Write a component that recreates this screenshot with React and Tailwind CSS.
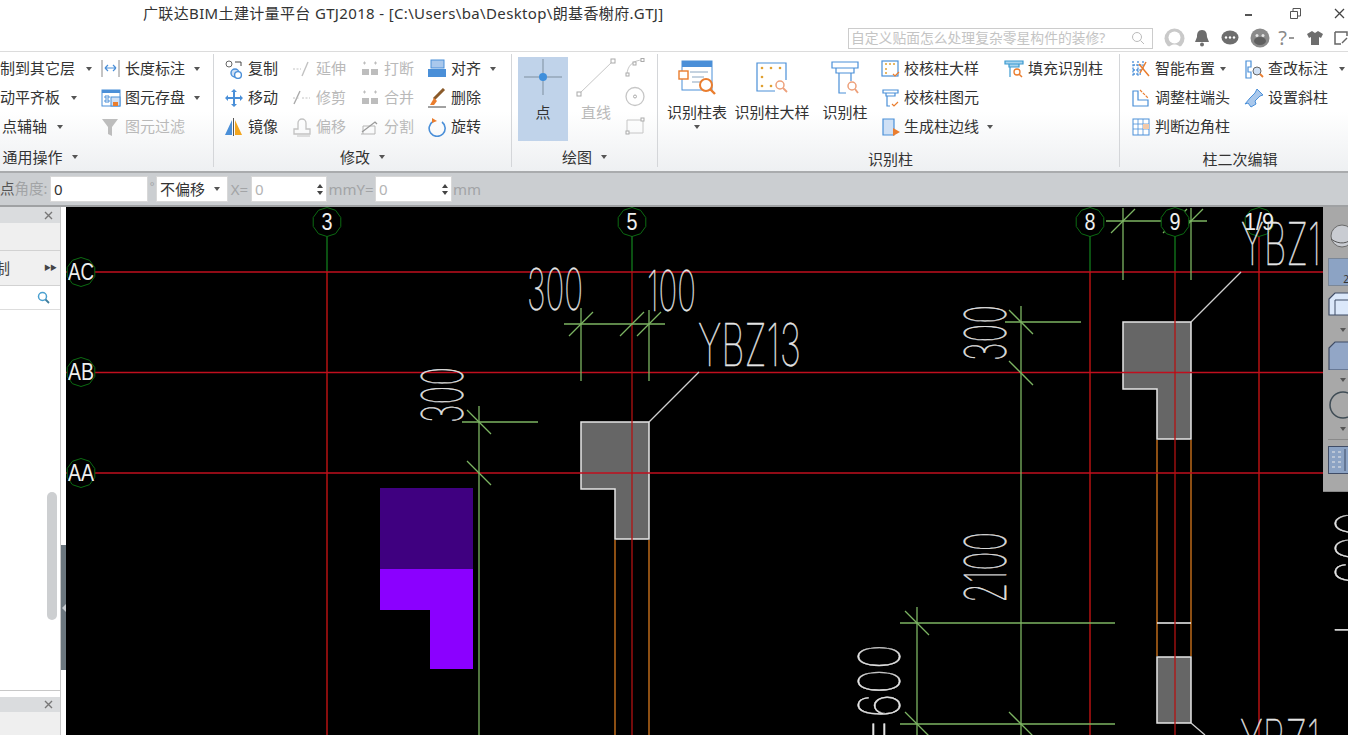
import React from 'react';

const Svg = ({ w = 20, h = 20, vb, className = '', children }) => (
    <svg width={w} height={h} viewBox={vb || `0 0 ${w} ${h}`} fill="none" className={`shrink-0 ${className}`}>
        {children}
    </svg>
);

const BLUE = '#4a8fd8';
const ORANGE = '#ea7d2e';
const GRAY = '#c2c2c2';

const icons = {
    dim: <><path d="M1 1v17M18 1v17" stroke="#8a8a8a" /><path d="M4 9h11M4 9l3-3M4 9l3 3M15 9l-3-3M15 9l-3 3" stroke={BLUE} strokeWidth="1.2" /></>,
    save: <><rect x="1" y="2" width="18" height="16" fill="#fff" stroke={BLUE} /><rect x="1" y="2" width="18" height="3" fill={BLUE} /><path d="M4 8h4v2H4zM4 12h4v2H4z" stroke={BLUE} /><rect x="10" y="9" width="9" height="9" fill="#cfe0f5" stroke={BLUE} /><rect x="12" y="14" width="5" height="4" fill={ORANGE} /></>,
    filter: <path d="M1 2h16l-6 8v9l-4-2v-7z" fill="#bdbdbd" />,
    copy: <><circle cx="5" cy="5" r="3" fill="#fff" stroke="#666" /><circle cx="11" cy="14" r="4" fill="#cfe0f5" stroke={BLUE} strokeWidth="1.4" /><circle cx="14" cy="16" r="3.4" fill="#fff" stroke={BLUE} strokeWidth="1.4" /><path d="M11 3h6v4" stroke="#444" /></>,
    move: <path d="M10 1l3 3h-2v5h5V7l3 3-3 3v-2h-5v5h2l-3 3-3-3h2v-5H4v2l-3-3 3-3v2h5V4H7z" fill={BLUE} />,
    mirror: <><path d="M8 3v15H1z" fill={BLUE} /><path d="M11 3v15h7z" fill="#f2a51f" /><path d="M9.5 1v18" stroke="#555" /></>,
    extend: <><path d="M1 10h8" stroke={GRAY} strokeDasharray="2 1.5" /><path d="M10 17l6-14" stroke={GRAY} strokeWidth="1.4" /></>,
    trim: <><path d="M2 16l6-13" stroke="#aaa" strokeWidth="1.4" /><path d="M1 10h6M10 10h8" stroke={GRAY} strokeDasharray="2 1.5" /></>,
    offset: <><path d="M2 17v-5h4V6a4 4 0 0 1 8 0v6h4v5z" stroke={GRAY} strokeWidth="1.3" /><path d="M5 19h13" stroke={GRAY} /></>,
    brk: <><rect x="2" y="10" width="7" height="6" fill="#bdbdbd" /><rect x="11" y="10" width="7" height="6" fill="#bdbdbd" /><path d="M3 4h3M4.500 2.500v3M14 4h3M15.500 2.500v3" stroke="#bdbdbd" /></>,
    split: <><path d="M1 17h14M3 17V9h12v8" stroke="#b5b5b5" /><path d="M2 15L15 5l2 2" stroke="#999" strokeWidth="1.3" /></>,
    align: <><rect x="4" y="1" width="13" height="8" fill="#a9c8ec" stroke={BLUE} /><rect x="1" y="10" width="18" height="8" fill={BLUE} /></>,
    erase: <><path d="M17 1L7 11" stroke="#8a5a2a" strokeWidth="3" /><path d="M7 10l3 3-3 4H3z" fill={ORANGE} /><path d="M1 19h18" stroke="#444" /></>,
    rotate: <><path d="M15 5a8 8 0 1 1-9-.5" stroke={BLUE} strokeWidth="1.6" /><path d="M5 1l5 3-5 2z" fill={ORANGE} /></>,
    check1: <><rect x="1" y="2" width="16" height="15" stroke={BLUE} strokeWidth="1.2" fill="#fff" /><circle cx="5" cy="5" r="1" fill="#e0a030" /><circle cx="9" cy="5" r="1" fill="#e0a030" /><circle cx="13" cy="5" r="1" fill="#e0a030" /><circle cx="5" cy="10" r="1" fill="#e0a030" /><circle cx="5" cy="14" r="1" fill="#e0a030" /><path d="M12 15l2 2 4-4" stroke={ORANGE} strokeWidth="1.2" /></>,
    check2: <><path d="M2 2h15v3H2zM5 5h9v3H5zM6 8v10h3" stroke={BLUE} strokeWidth="1.2" /><path d="M11 16l2 2 4-4" stroke={ORANGE} strokeWidth="1.2" /></>,
    edge: <><path d="M2 2h11v16H2z" fill="#cfe0f5" stroke={BLUE} strokeWidth="1.2" /><path d="M12 11l7 4-7 4z" fill={ORANGE} /></>,
    fill: <><path d="M1 2h18v3H1zM5 5h10v3H5z" stroke="#3b9ad0" strokeWidth="1.2" fill="#a8d4ee" /><path d="M6 8v10" stroke="#3b9ad0" strokeWidth="1.2" /><circle cx="13" cy="13" r="3" stroke={ORANGE} strokeWidth="1.3" /><path d="M15 15l3 3" stroke={ORANGE} strokeWidth="1.5" /></>,
    smart: <><path d="M2 2v16M7 2v16M12 2v8M2 6h10M2 11h8M2 15h8" stroke={BLUE} strokeDasharray="2 1.200" strokeWidth="1.3" /><path d="M8 5l10 12M15 3L9 14" stroke={ORANGE} strokeWidth="1.500" /></>,
    lookup: <><path d="M2 2h5v6H4v5h3v6H2z" stroke={BLUE} strokeWidth="1.2" /><circle cx="13" cy="12" r="4" fill="#cfe0f5" stroke="#666" /><path d="M16 15l3 3" stroke={ORANGE} strokeWidth="1.8" /></>,
    end: <><path d="M2 3h5v9h10v6H2z" stroke={BLUE} strokeWidth="1.200" fill="#fff" /><path d="M9 2l8 8" stroke={ORANGE} strokeWidth="1.200" strokeDasharray="3 1" /></>,
    tilt: <path d="M13 1l6 6-3 1-5 5 1 3-5 3-3-4-3 1 5-6 5-5z" fill="#a9c8ec" stroke={BLUE} />,
    corner: <><rect x="2" y="2" width="16" height="16" fill="#fff" stroke={BLUE} /><path d="M7 2v16M12 2v16M2 7h16M2 12h16" stroke={BLUE} strokeWidth=".8" /><rect x="12" y="7" width="6" height="5" fill="#f3c9a8" /></>,
};

const Icon = ({ name }) => <Svg>{icons[name]}</Svg>;

const Caret = ({ className = '' }) => (
    <span className={`block shrink-0 w-0 h-0 border-l-[3.5px] border-r-[3.5px] border-t-[4px] border-l-transparent border-r-transparent border-t-[#555] ${className}`} />
);

const Item = ({ icon, text, caret, off, gap = 'gap-[4px]', caretClass = 'ml-[5px]', className = '' }) => (
    <div className={`flex items-center h-[29px] whitespace-nowrap ${gap} ${off ? 'text-[#b9b9b9]' : 'text-[#333]'} ${className}`}>
        {icon && <Icon name={icon} />}
        <span>{text}</span>
        {caret && <Caret className={caretClass} />}
    </div>
);

const Group = ({ width, label, caret, children, last, pad = '', labelClass = 'pt-[5px]' }) => (
    <div className={`shrink-0 flex flex-col ${width} ${last ? '' : 'border-r border-[#d4d6d9]'} mb-[4px]`}>
        <div className={`flex h-[88px] ${pad}`}>{children}</div>
        <div className={`flex-1 flex items-center justify-center gap-[9px] whitespace-nowrap text-[#333] ${labelClass}`}>
            <span>{label}</span>
            {caret && <Caret />}
        </div>
    </div>
);

const BigButton = ({ width, label, caret, children }) => (
    <div className={`flex flex-col items-center whitespace-nowrap text-[#333] ${width}`}>
        <div className="h-[47px] flex items-center justify-center">{children}</div>
        <span>{label}</span>
        {caret && <Caret className="mt-[1px]" />}
    </div>
);

const TopBar = () => (
    <div className="h-[51px] relative flex flex-col bg-white">
        <div className="pl-[143px] h-[27px] flex items-center text-[#333] whitespace-nowrap justify-between">
            <span className="tracking-[0.35px]">广联达BIM土建计量平台 GTJ2018 - [C:\Users\ba\Desktop\朗基香榭府.GTJ]</span>
            <div className="flex items-center">
                <span className="w-[7px] h-[2px] bg-[#555] mr-[38px] mt-[3px]" />
                <Svg w={11} h={11} className="mr-[33px]"><path d="M.5 3.500h7v7h-7zM3 3V.5h7.500V8H8" stroke="#555" /></Svg>
                <Svg w={11} h={11} className="mr-[3px]"><path d="M1 1l9 9M10 1l-9 9" stroke="#444" strokeWidth="1.300" /></Svg>
            </div>
        </div>
        <div className="flex items-center pl-[848px] h-[22px]">
            <div className="w-[306px] h-[21px] border border-[#ccc] flex items-center justify-between pl-[2px] pr-[3px] text-[13.800px] text-[#c4c4c4] whitespace-nowrap">
                <span>自定义贴面怎么处理复杂零星构件的装修?</span>
                <Svg w={14} h={14} className="mr-[4px]"><circle cx="6" cy="6" r="4.500" stroke="#bbb" /><path d="M9.500 9.500l3.500 3.500" stroke="#bbb" /></Svg>
            </div>
            <div className="flex items-center ml-[11px] gap-[8px]">
                <Svg w={21} h={21}><circle cx="10.500" cy="10.500" r="10" fill="#c9c9c9" /><circle cx="10.500" cy="9.500" r="6" fill="#fff" /><path d="M4 21c1-6 12-6 13 0z" fill="#fff" /></Svg>
                <Svg w={16} h={18} className="ml-[1px]"><path d="M8 1c4 0 5 3 5 7l2 5H1l2-5c0-4 1-7 5-7z" fill="#6d6d6d" /><circle cx="8" cy="15.500" r="2" fill="#6d6d6d" /></Svg>
                <Svg w={18} h={16} className="ml-[3px]"><ellipse cx="9" cy="7.500" rx="8.500" ry="7" fill="#6d6d6d" /><circle cx="5" cy="7.500" r="1.200" fill="#fff" /><circle cx="9" cy="7.500" r="1.200" fill="#fff" /><circle cx="13" cy="7.500" r="1.200" fill="#fff" /></Svg>
                <Svg w={20} h={20} className="ml-[3px]"><circle cx="10" cy="10" r="9.500" fill="#8a8a8a" /><ellipse cx="10" cy="13" rx="6" ry="4" fill="#5f5f5f" /><circle cx="7" cy="7.500" r="1.500" fill="#e5e5e5" /><circle cx="13" cy="7.500" r="1.500" fill="#e5e5e5" /></Svg>
                <span className="text-[#8a8a8a] text-[20px] leading-none">?</span>
                <span className="w-[5px] h-[1.500px] bg-[#999] -ml-[6px]" />
                <Svg w={16} h={16} className="ml-[5px]"><path d="M5 1L0 4l2 4 2-1v8h8V7l2 1 2-4-5-3-3 2z" fill="#6d6d6d" /></Svg>
                <Svg w={14} h={14} className="ml-[3px]"><path d="M1 1h12v4M1 1v12h6" stroke="#666" strokeWidth="1.500" /><path d="M8 12l5-5" stroke="#666" strokeWidth="1.500" /></Svg>
            </div>
        </div>
    </div>
);

const Ribbon = () => (
    <div className="h-[122px] flex border-t border-b-2 border-t-[#dcdcdc] border-b-[#a9abad] pt-[2px] bg-gradient-to-b from-white via-white to-[#eef0f2]">
        <Group width="w-[214px]" label="通用操作" caret labelClass="pt-[5px] pl-[2px] pr-[135px]">
            <div className="w-[101px] shrink-0 overflow-hidden">
                <Item text="制到其它层" caret caretClass="ml-[7px]" />
                <Item text="动平齐板" caret caretClass="ml-[7px]" />
                <Item text="点辅轴" caret caretClass="ml-[6px]" className="pl-[2px]" />
            </div>
            <div>
                <Item icon="dim" text="长度标注" caret />
                <Item icon="save" text="图元存盘" caret />
                <Item icon="filter" text="图元过滤" off />
            </div>
        </Group>
        <Group width="w-[298px]" label="修改" caret pad="pl-[10px]">
            <div className="w-[68px]">
                <Item icon="copy" text="复制" />
                <Item icon="move" text="移动" />
                <Item icon="mirror" text="镜像" />
            </div>
            <div className="w-[68px]">
                <Item icon="extend" text="延伸" off />
                <Item icon="trim" text="修剪" off />
                <Item icon="offset" text="偏移" off />
            </div>
            <div className="w-[67px]">
                <Item icon="brk" text="打断" off />
                <Item icon="brk" text="合并" off />
                <Item icon="split" text="分割" off />
            </div>
            <div>
                <Item icon="align" text="对齐" caret />
                <Item icon="erase" text="删除" />
                <Item icon="rotate" text="旋转" />
            </div>
        </Group>
        <Group width="w-[146px]" label="绘图" caret pad="pl-[6px]">
            <div className="w-[50px] h-[84px] mt-[3px] bg-[#c0d3ea] flex flex-col items-center pt-[2px]">
                <Svg w={38} h={36}><path d="M19 0v36M0 18h38" stroke="#7f8f9f" /><circle cx="19" cy="18" r="4" fill="#3f8fdc" /></Svg>
                <span className="text-[#333] mt-[6px]">点</span>
            </div>
            <div className="w-[54px] ml-[1px] flex flex-col items-center text-[#b9b9b9] pt-[4px]">
                <Svg w={40} h={40}><path d="M3 36L37 3" stroke="#c6c6c6" /><rect x="1" y="34" width="4" height="4" fill="#fff" stroke="#aaa" /><rect x="35" y="1" width="4" height="4" fill="#fff" stroke="#aaa" /></Svg>
                <span className="mt-[3px]">直线</span>
            </div>
            <div className="flex flex-col gap-[8px] pt-[3px] ml-[2px]">
                <Svg w={20} h={21}><path d="M2 18C2 9 8 3 18 3" stroke="#c6c6c6" /><rect x="1" y="16" width="3" height="3" fill="#fff" stroke="#aaa" /><rect x="8" y="5" width="3" height="3" fill="#fff" stroke="#aaa" /><rect x="16" y="1.500" width="3" height="3" fill="#fff" stroke="#aaa" /></Svg>
                <Svg w={20} h={21}><circle cx="10" cy="10.500" r="9" stroke="#c6c6c6" strokeWidth="1.300" /><circle cx="10" cy="10.500" r="1.500" stroke="#aaa" /></Svg>
                <Svg w={20} h={21}><path d="M2 5h16v13H2z" stroke="#c6c6c6" /><rect x="1" y="16" width="3" height="3" fill="#fff" stroke="#aaa" /><rect x="16" y="3" width="3" height="3" fill="#fff" stroke="#aaa" /></Svg>
            </div>
        </Group>
        <Group width="w-[462px]" label="识别柱" pad="pl-[8px]" labelClass="pt-[7px] pl-[4px]">
            <BigButton width="w-[62px]" label="识别柱表" caret>
                <Svg w={38} h={36}><rect x="4" y="1" width="30" height="29" fill="#fff" stroke={BLUE} /><rect x="4" y="1" width="30" height="6" fill={BLUE} /><path d="M12 12h18M14 17h12M14 22h9" stroke="#8aa5c0" /><rect x="1" y="11" width="9" height="8" fill="#fff" stroke={ORANGE} strokeWidth="1.400" /><circle cx="28" cy="25" r="6" fill="#fff" stroke={ORANGE} strokeWidth="2" /><path d="M32 29l5 5" stroke={ORANGE} strokeWidth="2.400" /></Svg>
            </BigButton>
            <BigButton width="w-[88px]" label="识别柱大样">
                <Svg w={32} h={32}><path d="M1 1h29v28H1z" stroke={BLUE} strokeWidth="1.200" /><g fill="#e0a030"><circle cx="6" cy="6" r="1.300" /><circle cx="15" cy="6" r="1.300" /><circle cx="24" cy="6" r="1.300" /><circle cx="6" cy="15" r="1.300" /><circle cx="6" cy="24" r="1.300" /><circle cx="15" cy="24" r="1.300" /></g><rect x="19" y="18" width="13" height="14" fill="#fff" /><circle cx="24" cy="23" r="4" stroke="#eda07a" strokeWidth="1.500" /><path d="M27 26l4 4" stroke="#eda07a" strokeWidth="1.800" /></Svg>
            </BigButton>
            <BigButton width="w-[58px]" label="识别柱">
                <Svg w={28} h={34}><path d="M1 1h26v6H1zM5 7h18v5H5zM8 12v20h7M20 12v8" stroke={BLUE} strokeWidth="1.200" /><circle cx="21" cy="25" r="4" stroke="#eda07a" strokeWidth="1.500" /><path d="M24 28l3 4" stroke="#eda07a" strokeWidth="1.800" /></Svg>
            </BigButton>
            <div className="w-[123px] ml-[7px]">
                <Item icon="check1" text="校核柱大样" gap="gap-[3px]" />
                <Item icon="check2" text="校核柱图元" gap="gap-[3px]" />
                <Item icon="edge" text="生成柱边线" caret gap="gap-[3px]" />
            </div>
            <div>
                <Item icon="fill" text="填充识别柱" />
            </div>
        </Group>
        <Group width="w-[228px]" label="柱二次编辑" last pad="pl-[11px]" labelClass="pt-[7px] pl-[12px]">
            <div className="w-[113px]">
                <Item icon="smart" text="智能布置" caret caretClass="ml-[1px]" />
                <Item icon="end" text="调整柱端头" />
                <Item icon="corner" text="判断边角柱" />
            </div>
            <div>
                <Item icon="lookup" text="查改标注" caret caretClass="ml-[7px]" />
                <Item icon="tilt" text="设置斜柱" />
            </div>
        </Group>
    </div>
);

const NumberBox = ({ width }) => (
    <div className={`h-[26px] bg-white border border-[#d8d8d8] flex items-center justify-between pl-[3px] pr-[3px] text-[#b4b4b4] ${width}`}>
        <span>0</span>
        <span className="flex flex-col gap-[3px]">
            <span className="w-0 h-0 border-l-[3px] border-r-[3px] border-b-[4px] border-l-transparent border-r-transparent border-b-[#444] block" />
            <span className="w-0 h-0 border-l-[3px] border-r-[3px] border-t-[4px] border-l-transparent border-r-transparent border-t-[#444] block" />
        </span>
    </div>
);

const ParamBar = () => (
    <div className="h-[34px] bg-[#cbced1] border-b-2 border-b-[#9fa1a3] flex items-center text-[#a2a4a6] whitespace-nowrap">
        <span className="w-[50px] text-[14.500px]"><span className="text-[#555]">点</span>角度:</span>
        <div className="w-[98px] h-[26px] bg-white border border-[#d8d8d8] flex items-center pl-[3px] text-[#333]">0</div>
        <span className="w-[8px] text-center text-[11px] -mt-[6px]">°</span>
        <div className="w-[72px] h-[26px] bg-white border border-[#d8d8d8] flex items-center justify-between px-[3px] text-[#333]">
            <span>不偏移</span>
            <Caret className="mr-[4px]" />
        </div>
        <span className="w-[23px] text-center">X=</span>
        <NumberBox width="w-[76px]" />
        <span className="w-[48px] text-center">mmY=</span>
        <NumberBox width="w-[77px]" />
        <span className="ml-[1px]">mm</span>
    </div>
);

const SmallClose = () => (
    <Svg w={9} h={9} className="mr-[7px]"><path d="M1 1l7 7M8 1L1 8" stroke="#777" strokeWidth="1.400" /></Svg>
);

const LeftPanel = () => (
    <div className="w-[66px] shrink-0 flex bg-white">
        <div className="w-[61px] border-r border-[#c8c8c8] flex flex-col">
            <div className="h-[16px] bg-[#dadcde] flex items-center justify-end"><SmallClose /></div>
            <div className="h-[27px] bg-[#efefef]" />
            <div className="h-[36px] bg-[#f0f0f0] border-t border-b border-[#d2d2d2] flex items-center justify-between text-[#444] pr-[4px]">
                <span className="-ml-[5px]">制</span>
                <span className="text-[7px] tracking-[-1px] text-[#444]">▶▶</span>
            </div>
            <div className="h-[24px] border-b border-[#ddd] flex items-center justify-end pr-[10px]">
                <Svg w={13} h={13}><circle cx="5.500" cy="5.500" r="4" stroke="#4aa0d0" strokeWidth="1.500" /><path d="M8.500 8.500l3.500 3.500" stroke="#3f7f9f" strokeWidth="1.800" /></Svg>
            </div>
            <div className="h-[381px] border-b border-[#c8c8c8] pt-[182px] pl-[47px]">
                <div className="w-[10px] h-[128px] rounded-full bg-[#cdcfd1]" />
            </div>
            <div className="h-[6px]" />
            <div className="h-[15px] bg-[#dadcde] flex items-center justify-end"><SmallClose /></div>
            <div className="flex-1 bg-[#efefef]" />
        </div>
        <div className="flex-1 pt-[338px]">
            <div className="h-[125px] bg-[#6c777f] flex items-center justify-center">
                <span className="w-0 h-0 border-t-[4px] border-b-[4px] border-r-[4px] border-t-transparent border-b-transparent border-r-[#c8ccd0]" />
            </div>
        </div>
    </div>
);

const CadText = ({ x, y, w, h, rot, children, color = '#e4e4e4' }) => (
    <text
        x={x}
        y={y}
        fontSize={h / 0.727}
        textLength={w}
        lengthAdjust="spacingAndGlyphs"
        fontFamily="Inter, Roboto, sans-serif"
        fontWeight="100"
        fill={color}
        stroke={color}
        strokeWidth=".5"
        transform={rot ? `rotate(-90 ${x} ${y})` : undefined}
    >
        {children}
    </text>
);

const Axis = ({ x, y, label, w = 11 }) => (
    <g>
        <polygon
            points={[0, 1, 2, 3, 4, 5, 6, 7, 8, 9].map(i => {
                const a = (i * Math.PI) / 5;
                return `${x + 14.5 * Math.sin(a)},${y - 14.5 * Math.cos(a)}`;
            }).join(' ')}
            stroke="#0c6b12"
            strokeWidth="1"
        />
        <text x={x} y={y + 8} textAnchor="middle" fontSize="23" textLength={w} lengthAdjust="spacingAndGlyphs" fontFamily="Liberation Sans, sans-serif" fill="#eee">{label}</text>
    </g>
);

const Tick = ({ x, y, dir = 1 }) => (
    <path d={`M${x - 12} ${y + 12 * dir}L${x + 12} ${y - 12 * dir}`} />
);

const Canvas = () => (
    <svg width="1282" height="528" viewBox="66 207 1282 528" className="block">
        <rect x="66" y="207" width="1282" height="528" fill="#000" />
        {/* purple columns */}
        <rect x="380" y="488" width="93" height="81" fill="#3f0080" />
        <path d="M380 569h93v100h-43v-59h-50z" fill="#8b00ff" />
        {/* gray columns */}
        <g fill="#666" stroke="#e6e6e6" strokeWidth="1.500">
            <path d="M581 422h68v117h-34v-50h-34z" />
            <path d="M1123 322h68v117h-34v-50h-34z" />
            <path d="M1157 657h34v66h-34z" />
        </g>
        {/* orange walls */}
        <g stroke="#c8701c" strokeWidth="1.400">
            <path d="M615 540v195M649 540v195M1157 440v216M1191 440v216" />
        </g>
        <path d="M1157 623h34" stroke="#f4f4f4" strokeWidth="1.500" />
        {/* axis lines */}
        <g stroke="#0f6b18" strokeWidth="1.500">
            <path d="M327 236v36M632 236v36M1090 236v36M1175 236v36" />
        </g>
        <g stroke="#b51212" strokeWidth="1.500">
            <path d="M327 272v463M1090 272v463M1259 236v499" />
            <path d="M66 272h1258M66 372.500h1258M66 473h1258" stroke="#c00f1e" />
        </g>
        <path d="M632 272v463M1175 272v463" stroke="#b51212" strokeWidth="1.500" opacity=".85" />
        <path d="M632 207v30M1090 207v30M1259 207v30" stroke="#a03090" strokeWidth="1.500" />
        {/* dimension lines */}
        <g stroke="#7cb462" strokeWidth="1.300">
            <path d="M564 324h101M581 308v73M649 310v71" />
            <path d="M479 406v329M462 422h76" />
            <path d="M1106 221h101M1123 208v72M1191 208v72" />
            <path d="M1021 306v429M1005 322h76" />
            <path d="M917 607v128M900 623h215M900 724h215" />
            <Tick x={581} y={324} />
            <Tick x={632} y={324} />
            <Tick x={649} y={324} />
            <Tick x={479} y={422} dir={-1} />
            <Tick x={479} y={473} dir={-1} />
            <Tick x={1123} y={221} />
            <Tick x={1175} y={221} />
            <Tick x={1191} y={221} />
            <Tick x={1021} y={322} dir={-1} />
            <Tick x={1021} y={373} dir={-1} />
            <Tick x={917} y={623} dir={-1} />
            <Tick x={917} y={724} dir={-1} />
            <Tick x={1021} y={724} dir={-1} />
        </g>
        {/* leaders */}
        <path d="M649 422l50-50M1191 322l50-50M1191 723l14 12" stroke="#cfcfcf" strokeWidth="1.300" />
        {/* axis bubbles */}
        <Axis x={327} y={222} label="3" />
        <Axis x={632} y={222} label="5" />
        <Axis x={1090} y={222} label="8" />
        <Axis x={1175} y={222} label="9" />
        <Axis x={1259} y={222} label="1/9" w={30} />
        <Axis x={81} y={272} label="AC" w={26} />
        <Axis x={81} y={372} label="AB" w={26} />
        <Axis x={81} y={473} label="AA" w={26} />
        {/* dimension and column text */}
        <CadText x={527} y={310} w={56} h={42}>300</CadText>
        <CadText x={647} y={311} w={49} h={41}>100</CadText>
        <CadText x={698} y={366} w={103} h={43}>YBZ13</CadText>
        <CadText x={1241} y={265} w={80} h={43}>YBZ1</CadText>
        <CadText x={1240} y={762} w={80} h={43}>YBZ1</CadText>
        <CadText x={463} y={423} w={56} h={42} rot>300</CadText>
        <CadText x={1006} y={361} w={56} h={42} rot>300</CadText>
        <CadText x={1006} y={603} w={71} h={42} rot>2100</CadText>
        <CadText x={900} y={768} w={124} h={42} rot>L=600</CadText>
        <CadText x={1377} y={635} w={124} h={42} rot>L=600</CadText>
    </svg>
);

const SideTool = () => (
    <div className="absolute top-0 right-0 w-[25px] h-[285px] bg-[#a8a8a8] overflow-hidden flex flex-col pl-[5px] pt-[15px] border-b border-[#888]">
        <Svg w={36} h={30} className="mb-[6px]"><circle cx="14" cy="14" r="11" fill="#c9ccd2" stroke="#6a6a6a" /><path d="M3 17c8 6 17 5 23-2" stroke="#555" /></Svg>
        <div className="w-[36px] h-[28px] shrink-0 bg-[#8ca3c4] border border-[#7a8798] flex items-end justify-center text-[10px] text-[#333] mb-[6px] leading-none pb-[1px]">2</div>
        <Svg w={36} h={29}><path d="M1 7l6-6h28v22H1zM7 8h28" fill="#dbe8fa" stroke="#3f4c66" strokeWidth="1.200" /><path d="M7 8v15" stroke="#3f4c66" /></Svg>
        <Caret className="ml-[12px] mt-[7px] mb-[9px]" />
        <Svg w={36} h={29}><path d="M1 7l6-6h28v28H1z" fill="#92a6c6" stroke="#3f4c66" strokeWidth="1.200" /></Svg>
        <Caret className="ml-[12px] mt-[8px] mb-[9px]" />
        <Svg w={36} h={28}><circle cx="15" cy="14" r="13" stroke="#3f4c55" strokeWidth="1.500" /></Svg>
        <Caret className="ml-[12px] mt-[8px] mb-[8px]" />
        <div className="w-[36px] h-px shrink-0 bg-[#8a8a8a] mb-[6px]" />
        <Svg w={36} h={28}><rect x=".5" y=".5" width="35" height="27" fill="#8ca3c4" stroke="#3f4c66" /><path d="M4 6h3M4 11h3M4 16h3M4 21h3M10 6h3M10 11h3M10 16h3M10 21h3" stroke="#e8e8e8" /><path d="M17 3v22" stroke="#3f4c66" /></Svg>
    </div>
);

const App = () => (
    <div className="w-[1348px] h-[735px] overflow-hidden flex flex-col bg-white text-[15px] font-['Noto_Sans','Noto_Sans_CJK_SC',sans-serif]">
        <TopBar />
        <Ribbon />
        <ParamBar />
        <div className="flex-1 flex min-h-0">
            <LeftPanel />
            <div className="flex-1 relative overflow-hidden">
                <Canvas />
                <SideTool />
            </div>
        </div>
    </div>
);

export default App;
